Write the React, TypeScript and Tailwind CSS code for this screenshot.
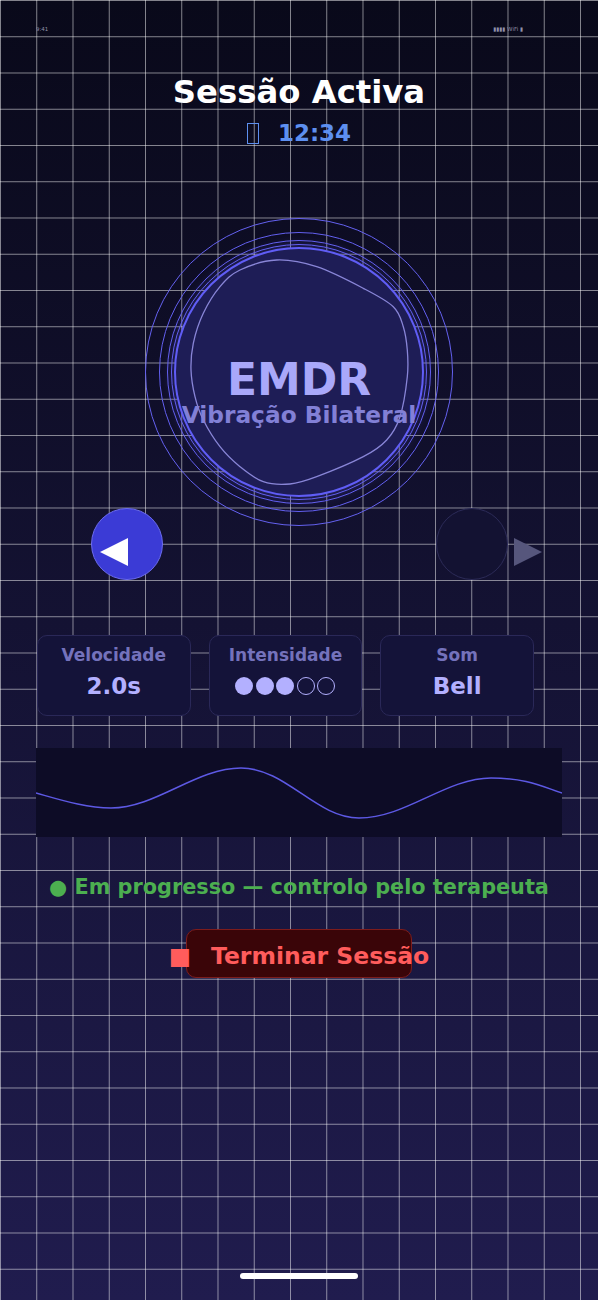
import React from 'react'

// outline of the wobbly shape inside the main circle (container coords, 308x308)
const blob: [number, number][] = [
  [95, 52], [131.7, 42], [171.7, 48.7], [218.3, 70.3], [248.3, 88.7], [258.3, 108.7],
  [262.3, 132], [262.3, 158.7], [255, 198.7], [241.7, 222], [218.3, 238.7], [171.7, 258.7],
  [145, 266], [118.3, 263.7], [95, 248.7], [75, 228.7], [58.3, 202], [50, 178.7],
  [46, 152], [48.3, 125.3], [58.3, 95.3], [75, 68.7],
]

function smoothPath(pts: [number, number][]) {
  const n = pts.length
  let d = `M${pts[0][0]},${pts[0][1]}`
  for (let i = 0; i < n; i++) {
    const p0 = pts[(i - 1 + n) % n]
    const p1 = pts[i]
    const p2 = pts[(i + 1) % n]
    const p3 = pts[(i + 2) % n]
    const c1x = p1[0] + (p2[0] - p0[0]) / 6
    const c1y = p1[1] + (p2[1] - p0[1]) / 6
    const c2x = p2[0] - (p3[0] - p1[0]) / 6
    const c2y = p2[1] - (p3[1] - p1[1]) / 6
    d += ` C${c1x.toFixed(1)},${c1y.toFixed(1)} ${c2x.toFixed(1)},${c2y.toFixed(1)} ${p2[0]},${p2[1]}`
  }
  return d + 'Z'
}

function Dots({ on, total }: { on: number; total: number }) {
  return (
    <div className="flex items-center gap-[2.5px]">
      {Array.from({ length: total }).map((_, i) =>
        i < on ? (
          <span key={i} className="w-[18px] h-[18px] rounded-full bg-[#b3b0ff]" />
        ) : (
          <span key={i} className="w-[18px] h-[18px] rounded-full border-[1.5px] border-[#b3b0ff]" />
        ),
      )}
    </div>
  )
}

const stats = [
  { label: 'Velocidade', value: '2.0s' },
  { label: 'Intensidade', dots: 3 },
  { label: 'Som', value: 'Bell' },
]

export default function App() {
  return (
    <div className="relative w-full h-[1300px] overflow-hidden flex flex-col font-['DejaVu_Sans',sans-serif] bg-[linear-gradient(to_right,rgba(255,255,255,0.5)_1px,transparent_1px),linear-gradient(to_bottom,rgba(255,255,255,0.5)_1px,transparent_1px),linear-gradient(to_bottom,#09091a,#201c4e)] bg-size-[36.25px_36.25px,36.25px_36.25px,100%_100%]">
      {/* Status bar */}
      <div className="h-[60px] flex items-center justify-between pl-[36px] pr-[75px] text-[5.5px] leading-none text-[#9090a8]">
        <span>9:41</span>
        <span>▮▮▮▮ WiFi ▮</span>
      </div>

      {/* Header */}
      <h1 className="mt-[12px] text-center text-[32.3px] leading-[40px] font-bold text-white">Sessão Activa</h1>
      <div className="mt-[7px] flex items-center justify-center h-[28px] text-[23px] leading-[28px] font-bold text-[#5d8ff0]">
        <span className="inline-block w-[12px] h-[21px] border-[1.5px] border-[#5d8ff0] mr-[19px]" />
        <span>12:34</span>
      </div>

      {/* Pulse circle */}
      <div className="relative mx-auto mt-[71px] w-[308px] h-[308px] shrink-0">
        <div className="absolute inset-0 rounded-full border border-[#6461f0]" />
        <div className="absolute inset-[14px] rounded-full border border-[#6461f0]" />
        <div className="absolute inset-[22px] rounded-full border border-[#6461f0]" />
        <div className="absolute inset-[26px] rounded-full border border-[#6461f0]" />
        <div className="absolute inset-[29px] rounded-full border-[2.5px] border-[#605df6] bg-[#1e1d56] shadow-[0_0_14px_rgba(95,92,245,0.4)]" />
        <svg className="absolute inset-0" width="308" height="308" viewBox="0 0 308 308">
          <path d={smoothPath(blob)} fill="none" stroke="#9591e6" strokeWidth="1.3" opacity="0.9" />
        </svg>
        <div className="absolute inset-0 flex flex-col items-center pt-[142px] font-bold whitespace-nowrap">
          <span className="text-[44px] leading-[40px] text-[#a9a8fa]">EMDR</span>
          <span className="mt-[2.5px] text-[23.3px] leading-[23px] text-[#8280d6]">Vibração Bilateral</span>
        </div>
      </div>

      {/* Bilateral indicators */}
      <div className="-mt-[18px] flex items-start justify-between pl-[91px] pr-[56px]">
        <div className="w-[72px] h-[72px] rounded-full bg-[#3b3bd6] border border-[#6c6cf0] pl-[8px] pt-[29px]">
          <svg width="28" height="28" viewBox="0 0 28 28">
            <polygon points="0,14 28,0 28,28" fill="#ffffff" />
          </svg>
        </div>
        <div className="flex items-start gap-[6px]">
          <div className="w-[72px] h-[72px] rounded-full bg-[#131232] border border-[#2c2b58]" />
          <svg className="mt-[30px]" width="28" height="28" viewBox="0 0 28 28">
            <polygon points="0,0 28,14 0,28" fill="#56567c" />
          </svg>
        </div>
      </div>

      {/* Stats */}
      <div className="mt-[55px] ml-[37px] w-[497px] grid grid-cols-3 gap-[18px]">
        {stats.map((s) => (
          <div
            key={s.label}
            className="h-[81px] rounded-[10px] border border-[#2a2858] bg-[#141339] flex flex-col items-center pt-[9px] font-bold"
          >
            <span className="text-[17px] leading-[20px] text-[#7472bc]">{s.label}</span>
            <div className="mt-[7px] h-[28px] flex items-center text-[23px] leading-[28px] text-[#b3b0ff]">
              {s.dots ? <Dots on={s.dots} total={5} /> : s.value}
            </div>
          </div>
        ))}
      </div>

      {/* Wave */}
      <div className="mt-[32px] ml-[36px] w-[526px] h-[89px] bg-[#0d0c26]">
        <svg width="526" height="89" viewBox="0 0 526 89">
          <path
            d="M0,45 C25,52 50,60 75,60 C120,60 160,20 205,20 C250,20 280,70 323,70 C370,70 410,30 455,30 C490,30 505,38 526,45"
            fill="none"
            stroke="#5d59e4"
            strokeWidth="1.5"
          />
        </svg>
      </div>

      {/* Status */}
      <p className="mt-[36px] text-center text-[20.8px] leading-[28px] font-bold text-[#4caf50] whitespace-nowrap">
        ● Em progresso — controlo pelo terapeuta
      </p>

      {/* End session */}
      <div className="mt-[28px] flex justify-center">
        <button className="w-[226px] h-[49px] rounded-[10px] bg-[#3a0508] border border-[#7d1c1c] flex items-center justify-center pt-[5px] text-[23.5px] leading-[28px] font-bold text-[#ff5c5c] whitespace-nowrap">
          <span className="mr-[20px]">■</span>
          <span>Terminar Sessão</span>
        </button>
      </div>

      {/* Home indicator */}
      <div className="mt-auto mb-[21px] mx-auto w-[118px] h-[6px] rounded-full bg-white" />
    </div>
  )
}
